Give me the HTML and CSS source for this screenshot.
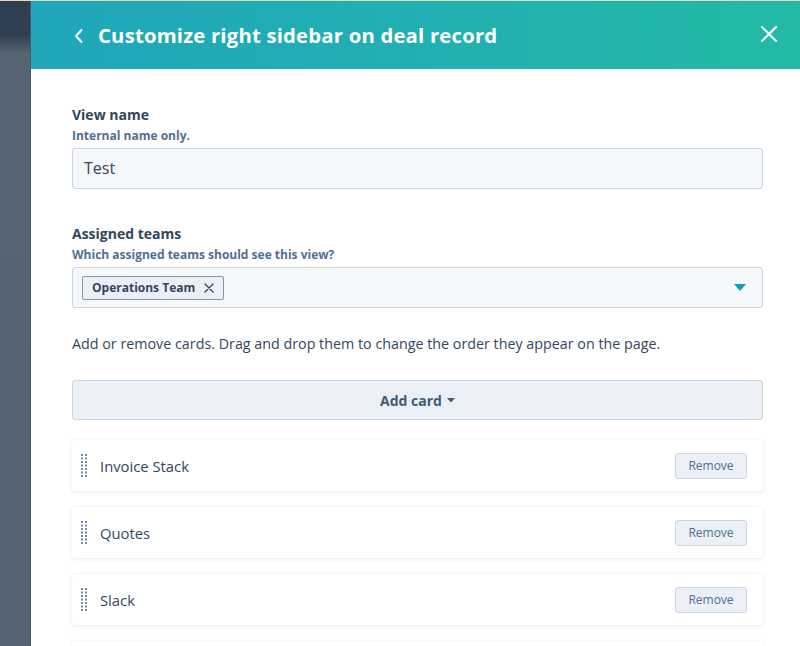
FILE: index.html
```html
<!DOCTYPE html>
<html>
<head>
<meta charset="utf-8">
<link rel="stylesheet" href="styles.css">
</head>
<body>
<div class="page">
  <div class="backdrop"></div>
  <div class="panel">
    <header class="header">
      <div class="title-wrap">
        <svg class="back" width="12" height="16" viewBox="0 0 12 16"><path d="M8.5 2 L3 8 L8.5 14" fill="none" stroke="#fff" stroke-width="2" stroke-linecap="round" stroke-linejoin="round"/></svg>
        <h1 class="title">Customize right sidebar on deal record</h1>
      </div>
      <svg class="close" width="18" height="18" viewBox="0 0 18 18"><path d="M2 2 L16 16 M16 2 L2 16" fill="none" stroke="#fff" stroke-width="2.2" stroke-linecap="round"/></svg>
    </header>
    <main class="content">
      <section class="field">
        <div class="label">View name</div>
        <div class="help">Internal name only.</div>
        <div class="input">Test</div>
      </section>
      <section class="field">
        <div class="label">Assigned teams</div>
        <div class="help">Which assigned teams should see this view?</div>
        <div class="input select">
          <span class="tag">Operations Team
            <svg class="tag-x" width="10" height="10" viewBox="0 0 10 10"><path d="M1 1 L9 9 M9 1 L1 9" stroke="#33475b" stroke-width="1.3" stroke-linecap="round"/></svg>
          </span>
          <svg class="caret" width="12" height="7" viewBox="0 0 12 7"><path d="M0 0 H12 L6 7 Z" fill="#00a4bd"/></svg>
        </div>
      </section>
      <p class="intro">Add or remove cards. Drag and drop them to change the order they appear on the page.</p>
      <div class="add-card">Add card <svg class="small-caret" width="8" height="5" viewBox="0 0 8 5"><path d="M0 0 H8 L4 4.5 Z" fill="#425b76"/></svg></div>
      <div class="cards">
        <div class="card">
          <svg class="grip" width="6" height="23" viewBox="0 0 6 23"><g fill="#6f8bab"><rect x="0" y="0" width="2" height="2"/><rect x="4" y="0" width="2" height="2"/><rect x="0" y="3.5" width="2" height="2"/><rect x="4" y="3.5" width="2" height="2"/><rect x="0" y="7" width="2" height="2"/><rect x="4" y="7" width="2" height="2"/><rect x="0" y="10.5" width="2" height="2"/><rect x="4" y="10.5" width="2" height="2"/><rect x="0" y="14" width="2" height="2"/><rect x="4" y="14" width="2" height="2"/><rect x="0" y="17.5" width="2" height="2"/><rect x="4" y="17.5" width="2" height="2"/><rect x="0" y="21" width="2" height="2"/><rect x="4" y="21" width="2" height="2"/></g></svg>
          <span class="card-name">Invoice Stack</span>
          <button class="remove">Remove</button>
        </div>
        <div class="card">
          <svg class="grip" width="6" height="23" viewBox="0 0 6 23"><g fill="#6f8bab"><rect x="0" y="0" width="2" height="2"/><rect x="4" y="0" width="2" height="2"/><rect x="0" y="3.5" width="2" height="2"/><rect x="4" y="3.5" width="2" height="2"/><rect x="0" y="7" width="2" height="2"/><rect x="4" y="7" width="2" height="2"/><rect x="0" y="10.5" width="2" height="2"/><rect x="4" y="10.5" width="2" height="2"/><rect x="0" y="14" width="2" height="2"/><rect x="4" y="14" width="2" height="2"/><rect x="0" y="17.5" width="2" height="2"/><rect x="4" y="17.5" width="2" height="2"/><rect x="0" y="21" width="2" height="2"/><rect x="4" y="21" width="2" height="2"/></g></svg>
          <span class="card-name">Quotes</span>
          <button class="remove">Remove</button>
        </div>
        <div class="card">
          <svg class="grip" width="6" height="23" viewBox="0 0 6 23"><g fill="#6f8bab"><rect x="0" y="0" width="2" height="2"/><rect x="4" y="0" width="2" height="2"/><rect x="0" y="3.5" width="2" height="2"/><rect x="4" y="3.5" width="2" height="2"/><rect x="0" y="7" width="2" height="2"/><rect x="4" y="7" width="2" height="2"/><rect x="0" y="10.5" width="2" height="2"/><rect x="4" y="10.5" width="2" height="2"/><rect x="0" y="14" width="2" height="2"/><rect x="4" y="14" width="2" height="2"/><rect x="0" y="17.5" width="2" height="2"/><rect x="4" y="17.5" width="2" height="2"/><rect x="0" y="21" width="2" height="2"/><rect x="4" y="21" width="2" height="2"/></g></svg>
          <span class="card-name">Slack</span>
          <button class="remove">Remove</button>
        </div>
        <div class="card"></div>
      </div>
    </main>
  </div>
</div>
</body>
</html>
```
FILE: styles.css
```css
* { box-sizing: border-box; }
html, body { margin: 0; padding: 0; }
body {
  font-family: "Open Sans", "Liberation Sans", sans-serif;
  color: #33475b;
  overflow: hidden;
  background: #fff;
}
.page {
  display: flex;
  width: 800px;
  height: 646px;
  overflow: hidden;
  border-top: 1px solid #f2d3bd;
}
.backdrop {
  width: 31px;
  flex: none;
  background: linear-gradient(to bottom, #2e3e51 0, #2f3f52 34px, #566473 52px, #536170 100%);
  border-right: 1px solid #4a5868;
}
.panel {
  flex: 1;
  display: flex;
  flex-direction: column;
  background: #fff;
}
.header {
  height: 68px;
  flex: none;
  background: linear-gradient(90deg, #1fa6ba 0%, #21b2b0 60%, #22baa5 100%);
  display: flex;
  align-items: center;
  justify-content: space-between;
  padding: 0 22px 0 42px;
}
.title-wrap { display: flex; align-items: center; gap: 13px; }
.back { display: block; margin-top: 1px; }
.title {
  margin: 0;
  color: #fff;
  font-size: 20.3px;
  font-weight: 700;
  letter-spacing: 0.2px;
}
.close { display: block; margin-top: -2px; }
.content {
  padding: 36px 37px 0 41px;
}
.field { margin-bottom: 35px; }
.label {
  font-size: 14px;
  font-weight: 700;
  line-height: 20px;
  color: #33475b;
}
.help {
  font-size: 12px;
  font-weight: 700;
  line-height: 16px;
  color: #516f90;
  margin-top: 3px;
}
.input {
  margin-top: 4px;
  height: 41px;
  background: #f5f8fa;
  border: 1px solid #cbd6e2;
  border-radius: 3px;
  display: flex;
  align-items: center;
  padding: 0 11px 2px;
  font-size: 16px;
  color: #33475b;
}
.select { padding: 0 16px 0 9px; justify-content: space-between; }
.tag {
  display: inline-flex;
  align-items: center;
  gap: 9px;
  height: 24px;
  padding: 0 9px 0 9px;
  background: #eaf0f6;
  border: 1px solid #7c98b6;
  border-radius: 2px;
  font-size: 12px;
  font-weight: 700;
  color: #33475b;
}
.tag-x { display: block; }
.caret { display: block; }
.intro {
  margin: -9px 0 26px;
  font-size: 14.3px;
  line-height: 20px;
  color: #33475b;
}
.add-card {
  height: 40px;
  background: #eaf0f6;
  border: 1px solid #cbd6e2;
  border-radius: 3px;
  display: flex;
  align-items: center;
  justify-content: center;
  gap: 5px;
  font-size: 14px;
  font-weight: 700;
  color: #425b76;
  margin-bottom: 20px;
}
.small-caret { display: block; margin-top: 1px; }
.cards { display: flex; flex-direction: column; gap: 16px; }
.card {
  height: 51px;
  flex: none;
  background: #fff;
  border-radius: 3px;
  box-shadow: 0 1px 4px rgba(45, 62, 80, 0.10), 0 0 1px rgba(45, 62, 80, 0.08);
  display: flex;
  align-items: center;
  padding: 0 16px 0 9px;
}
.grip { display: block; flex: none; }
.card-name {
  margin-left: 13px;
  flex: 1;
  font-size: 14.8px;
  color: #33475b;
}
.remove {
  width: 72px;
  height: 26px;
  background: #eaf0f6;
  border: 1px solid #cbd6e2;
  border-radius: 3px;
  font-family: "Open Sans", "Liberation Sans", sans-serif;
  font-size: 12px;
  color: #506e8f;
  padding: 0;
}
```
